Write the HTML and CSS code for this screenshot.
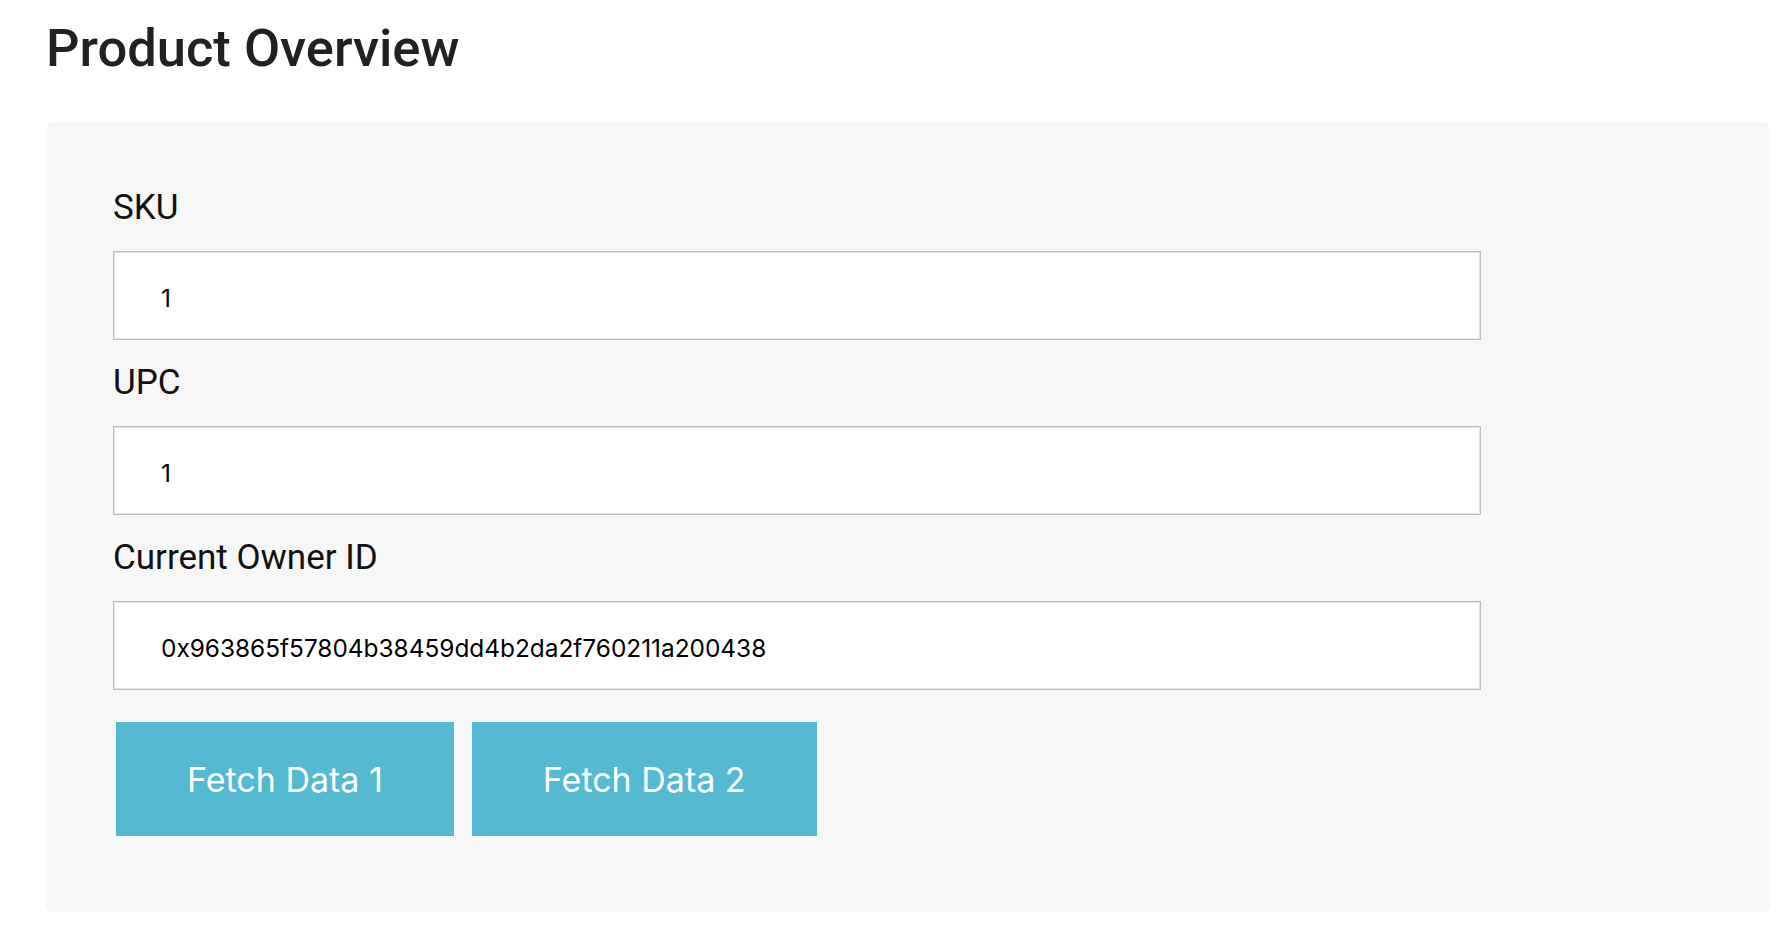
FILE: index.html
```html
<!DOCTYPE html>
<html lang="en">
<head>
<meta charset="utf-8">
<title>Product Overview</title>
<link rel="stylesheet" href="styles.css">
</head>
<body>
<main class="page">
  <h1 class="title">Product Overview</h1>
  <section class="panel">
    <div class="field">
      <label class="label" for="sku">SKU</label>
      <input class="input" id="sku" type="text" value="1">
    </div>
    <div class="field">
      <label class="label" for="upc">UPC</label>
      <input class="input" id="upc" type="text" value="1">
    </div>
    <div class="field">
      <label class="label" for="owner">Current Owner ID</label>
      <input class="input" id="owner" type="text" value="0x963865f57804b38459dd4b2da2f760211a200438">
    </div>
    <div class="actions">
      <button class="btn" type="button">Fetch Data 1</button>
      <button class="btn" type="button">Fetch Data 2</button>
    </div>
  </section>
</main>
</body>
</html>
```
FILE: styles.css
```css
html, body {
  margin: 0;
  padding: 0;
  background: #ffffff;
}

.page {
  padding: 17px 22px 0 46px;
}

.title {
  margin: 0 0 43px 0;
  font-family: Roboto, "Noto Sans", sans-serif;
  font-weight: 500;
  font-size: 52.5px;
  line-height: 62px;
  color: #212121;
}

.panel {
  background: #f7f7f7;
  border-radius: 8px;
  padding: 65px 67px 76px 67px;
  display: flex;
  flex-direction: column;
}

.field {
  display: flex;
  flex-direction: column;
  align-items: flex-start;
  margin-bottom: 22px;
}

.label {
  font-family: Roboto, "Noto Sans", sans-serif;
  font-size: 35px;
  line-height: 42px;
  color: #111111;
  margin-bottom: 22px;
}

.input {
  box-sizing: border-box;
  width: 1368px;
  height: 89px;
  margin: 0;
  padding: 4px 0 0 47px;
  border: 1px solid #bdbdbd;
  box-shadow: inset 0 0 0 1px #e4e4e4;
  background: #ffffff;
  font-family: Inter, "Liberation Sans", sans-serif;
  font-size: 24.4px;
  color: #000000;
  outline: none;
}

.actions {
  display: flex;
  gap: 18px;
  margin-top: 10px;
  padding-left: 3px;
}

.btn {
  height: 114px;
  padding: 0 71px;
  border: none;
  border-radius: 0;
  background: #55b9d2;
  color: #ffffff;
  font-family: Inter, "Liberation Sans", sans-serif;
  font-size: 34px;
  font-weight: 400;
  cursor: pointer;
}
```
